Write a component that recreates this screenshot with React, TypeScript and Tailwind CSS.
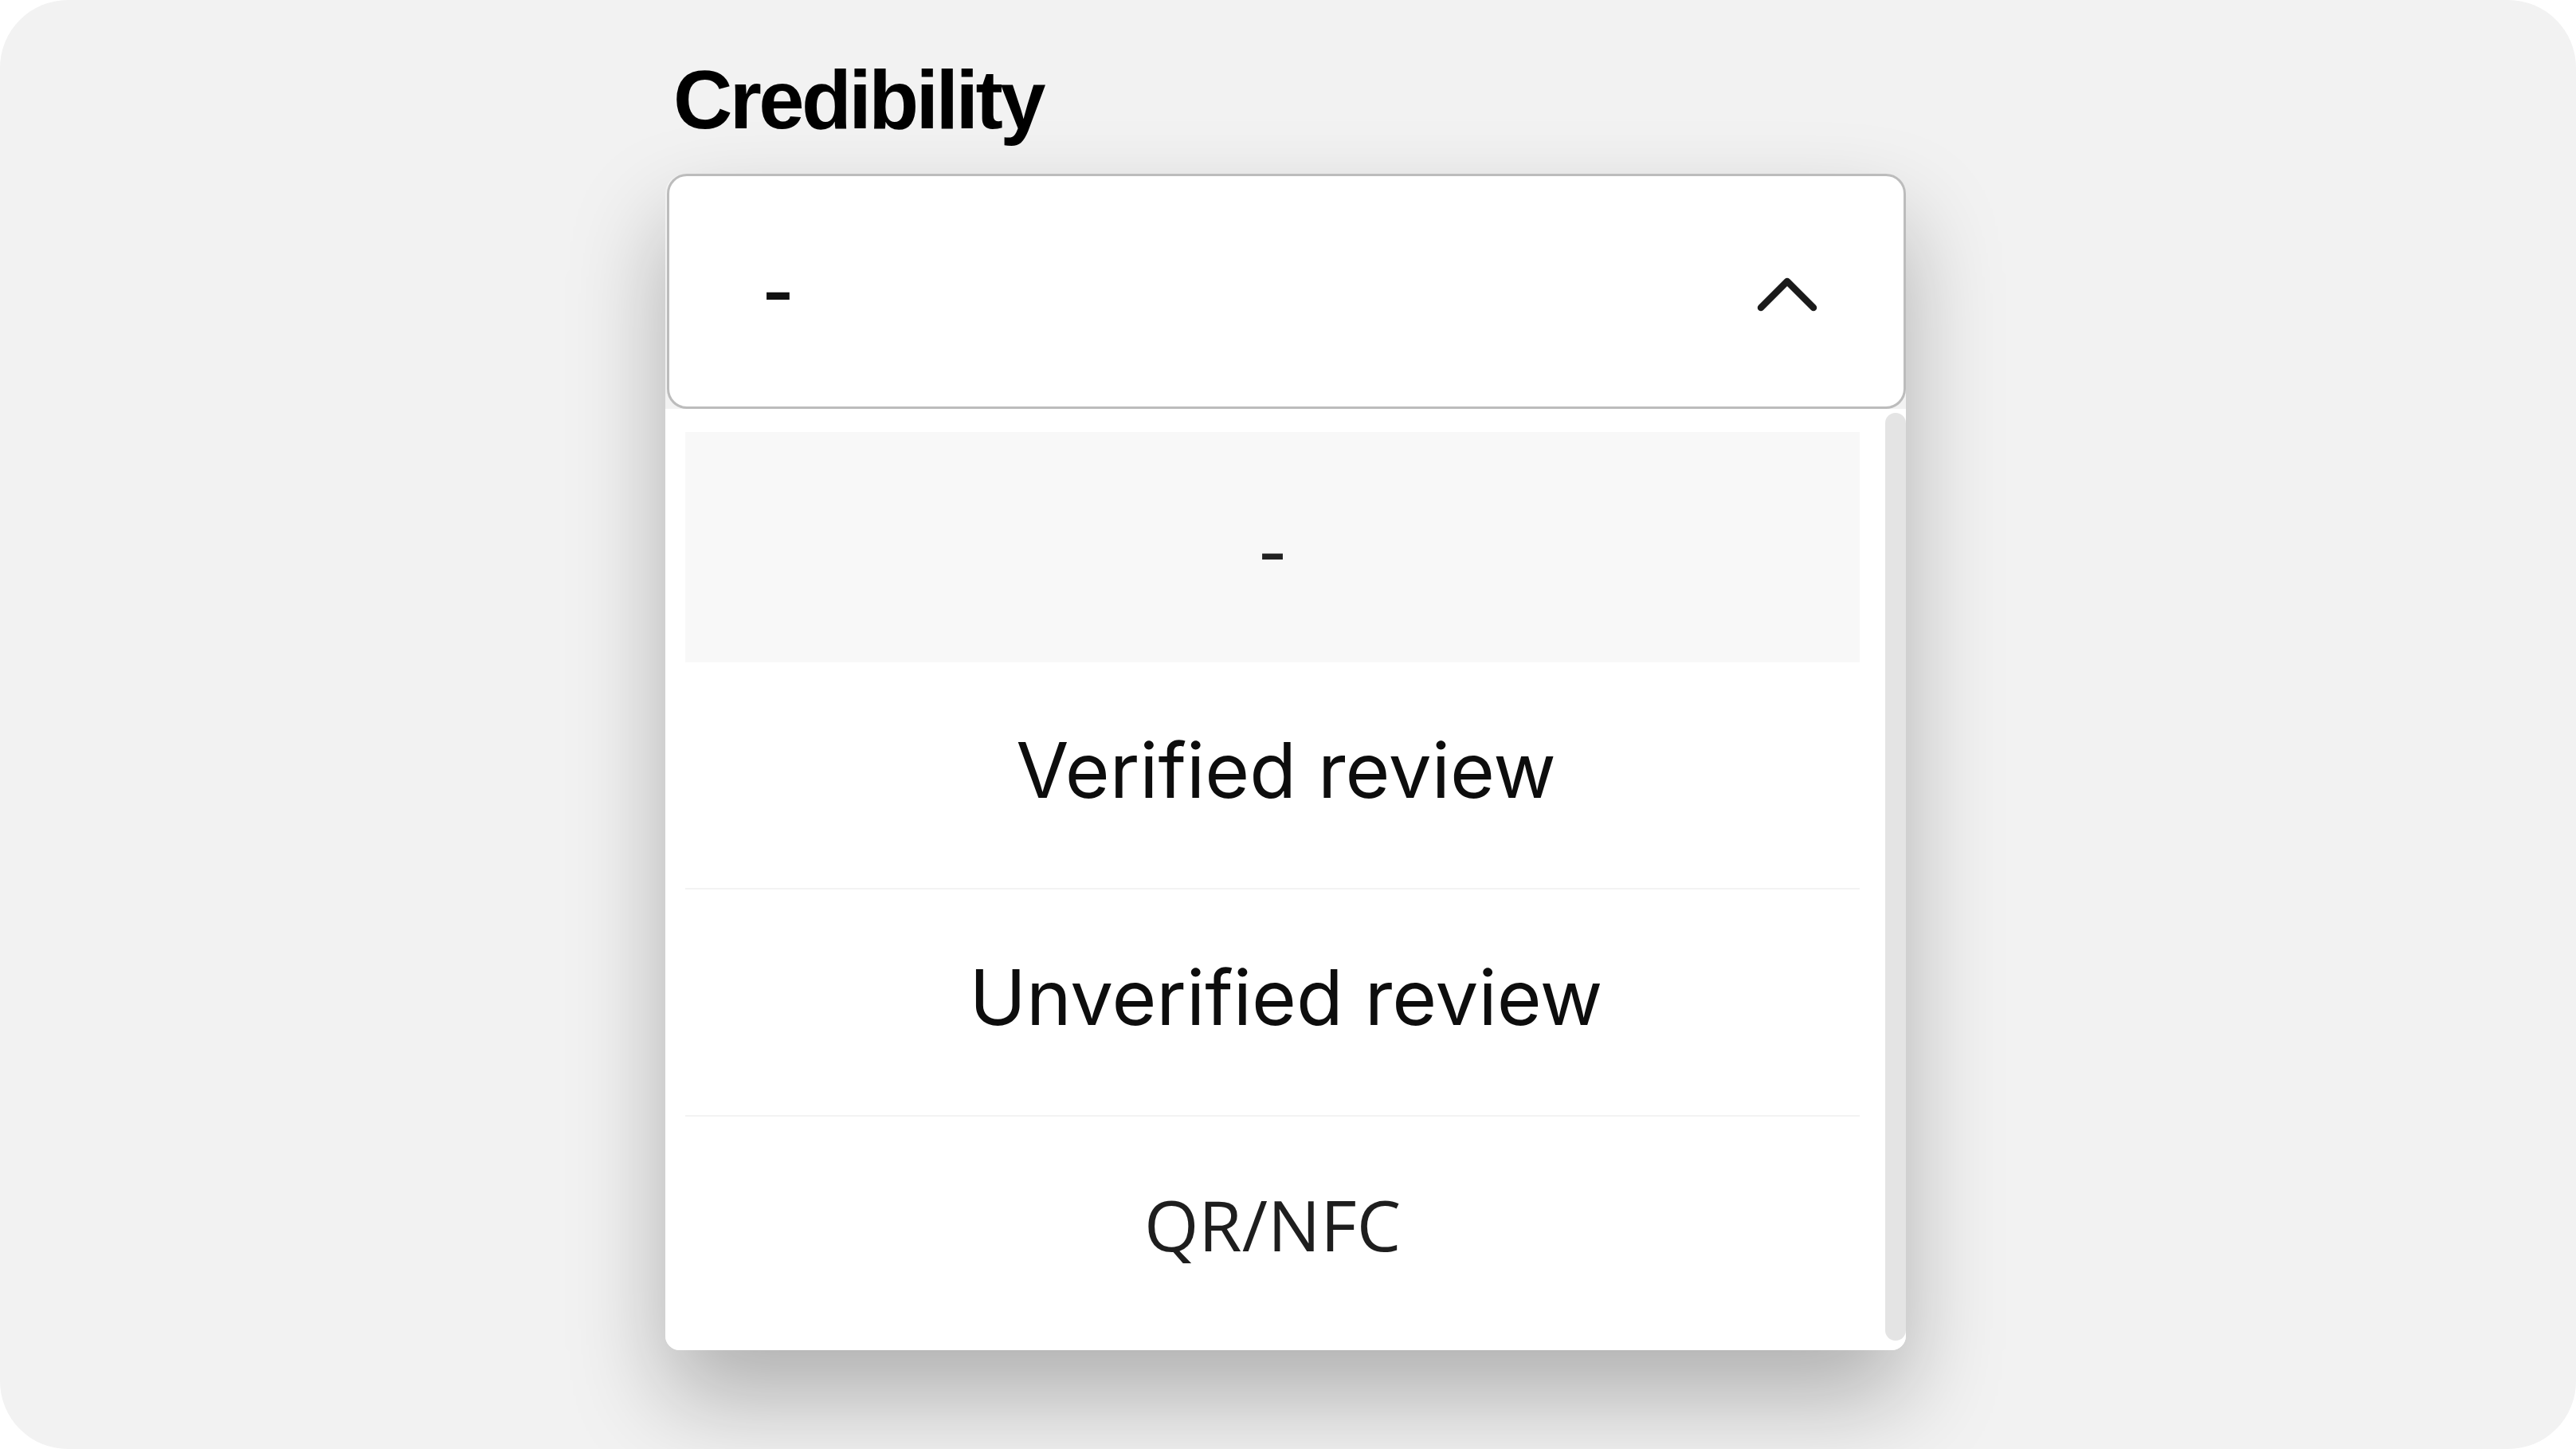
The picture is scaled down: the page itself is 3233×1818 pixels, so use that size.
import React from "react";

const options = [
  { label: "-", active: true },
  { label: "Verified review" },
  { label: "Unverified review" },
  { label: "QR/NFC", alt: true },
];

function ChevronUp() {
  return (
    <svg width="76" height="43" viewBox="0 0 76 43" fill="none" className="shrink-0 mt-[8px]">
      <path
        d="M5 38 L38 5 L71 38"
        stroke="#1a1a1a"
        strokeWidth="8.5"
        strokeLinecap="round"
        strokeLinejoin="round"
      />
    </svg>
  );
}

export default function App() {
  return (
    <div className="w-[3233px] h-[1818px] bg-white">
      <div className="w-full h-full rounded-[85px] bg-[#f2f2f2] overflow-hidden pl-[835px] pt-[74px]">
        <div className="w-[1557px]">
          <h1 className="pl-[10px] text-[103px] leading-none font-bold tracking-[-0.035em] text-black font-['Liberation_Sans',Arial,sans-serif]">
            Credibility
          </h1>

          <div className="mt-[41px] shadow-[0_60px_120px_rgba(0,0,0,0.28)] rounded-t-[25px] rounded-b-[18px]">
            {/* trigger */}
            <div className="ml-[2px] h-[295px] flex items-center justify-between bg-white border-[3px] border-[#bcbcbc] rounded-[25px] pl-[116px] pr-[108px] font-['Inter',sans-serif]">
              <span className="text-[88px] font-semibold text-[#111] leading-none">-</span>
              <ChevronUp />
            </div>

            {/* menu */}
            <div className="flex bg-white rounded-b-[18px]">
              <div className="flex-1 pl-[25px] pr-[32px] pt-[29px] pb-[10px] font-['Inter',sans-serif]">
                {options.map((o, i) => (
                  <div key={i}>
                    {i > 1 && <div className="h-[2px] bg-[#f3f3f3]" />}
                    <div
                      className={
                        o.active
                          ? "h-[289px] flex items-center justify-center bg-[#f8f8f8] pt-[14px] text-[80px] font-medium text-[#222]"
                          : o.alt
                            ? "h-[283px] flex items-center justify-center pb-[14px] text-[88px] text-[#1e1e1e] font-['Open_Sans',sans-serif]"
                            : "h-[283px] flex items-center justify-center pl-[34px] pb-[14px] text-[96px] text-[#0d0d0d]"
                      }
                    >
                      {o.label}
                    </div>
                  </div>
                ))}
              </div>
              {/* scrollbar */}
              <div className="w-[26px] mt-[5px] mb-[12px] rounded-[13px] bg-[#e4e4e4]" />
            </div>
          </div>
        </div>
      </div>
    </div>
  );
}
